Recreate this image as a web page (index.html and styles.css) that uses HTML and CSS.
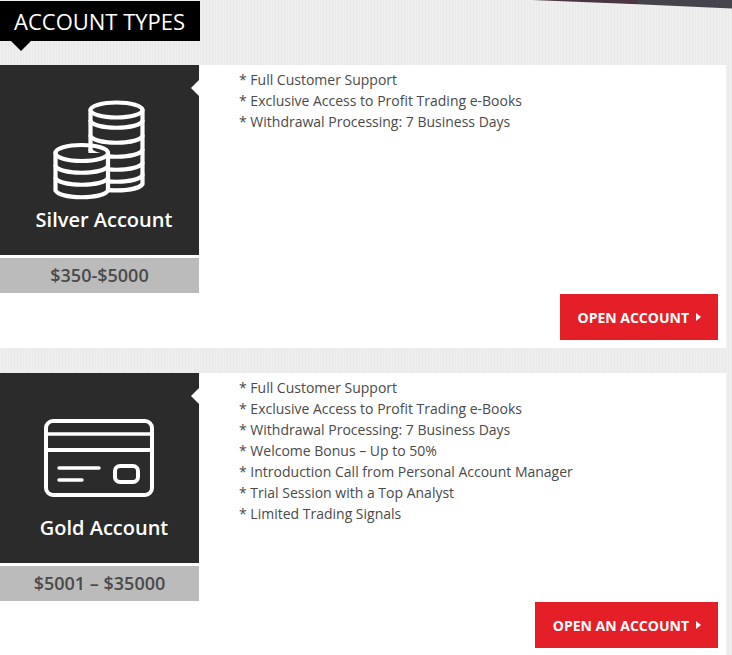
FILE: index.html
```html
<!DOCTYPE html>
<html lang="en">
<head>
<meta charset="utf-8">
<title>Account Types</title>
<link rel="stylesheet" href="styles.css">
</head>
<body>
<svg class="corner" width="202" height="10" viewBox="0 0 202 10"><polygon points="2,0 108,0 108,4.300" fill="#4a3540"/><polygon points="108,0 202,0 202,8.600 108,4.300" fill="#45444c"/></svg>
<h1 class="heading">ACCOUNT TYPES</h1>
<section class="card">
  <div class="side">
    <div class="tile">
      <svg class="icon icon-coins" width="92" height="100" viewBox="0 0 92 100" fill="none" stroke="#fff" stroke-width="4.200" stroke-linecap="round">
        <path d="M37.500 10V84C43 92.500 84 92.500 89.500 84V10"/>
        <ellipse cx="63.500" cy="10" rx="26" ry="7.500"/>
        <path d="M37.500 21C43 30 84 30 89.500 21M37.500 36C43 45 84 45 89.500 36M37.500 50C43 59 84 59 89.500 50M37.500 63C43 72 84 72 89.500 63M37.500 75C43 84 84 84 89.500 75"/>
        <path d="M2.500 53V90.500C8 99.500 49.500 99.500 55 90.500V53" fill="#2b2b2b"/>
        <ellipse cx="28.750" cy="53" rx="26.250" ry="8"/>
        <path d="M2.500 66C8 75 49.500 75 55 66M2.500 78C8 87 49.500 87 55 78"/>
      </svg>
      <h2 class="name">Silver Account</h2>
    </div>
    <p class="price">$350-$5000</p>
  </div>
  <div class="body">
    <p class="features">* Full Customer Support<br>* Exclusive Access to Profit Trading e-Books<br>* Withdrawal Processing: 7 Business Days</p>
    <a class="btn" href="#">OPEN ACCOUNT<span class="caret"></span></a>
  </div>
</section>
<section class="card">
  <div class="side">
    <div class="tile">
      <svg class="icon icon-card" width="110" height="78" viewBox="0 0 110 78" fill="none" stroke="#fff" stroke-width="4" stroke-linecap="round">
        <rect x="2" y="2" width="106" height="74" rx="7"/>
        <path d="M2 15H108" stroke-width="3.500"/>
        <path d="M2 31H108"/>
        <path d="M15 49H55" stroke-width="3.500"/>
        <path d="M15 61H38" stroke-width="3.500"/>
        <rect x="71" y="47" width="23" height="16" rx="5"/>
      </svg>
      <h2 class="name">Gold Account</h2>
    </div>
    <p class="price">$5001 – $35000</p>
  </div>
  <div class="body">
    <p class="features">* Full Customer Support<br>* Exclusive Access to Profit Trading e-Books<br>* Withdrawal Processing: 7 Business Days<br>* Welcome Bonus – Up to 50%<br>* Introduction Call from Personal Account Manager<br>* Trial Session with a Top Analyst<br>* Limited Trading Signals</p>
    <a class="btn" href="#">OPEN AN ACCOUNT<span class="caret"></span></a>
  </div>
</section>
</body>
</html>
```
FILE: styles.css
```css
* { box-sizing: border-box; }
html, body { height: 100%; }
body {
  margin: 0;
  padding-top: 1px;
  overflow: hidden;
  position: relative;
  font-family: "Open Sans", sans-serif;
  color: #4a4a4a;
  background: repeating-linear-gradient(90deg, #eee 0, #eee 2px, #e9e9e9 2px, #e9e9e9 3px);
}
.corner { position: absolute; top: 0; right: 0; }
.heading {
  position: relative;
  width: 200px;
  height: 40px;
  margin: 0 0 24px;
  background: #000;
  color: #fff;
  font-size: 22px;
  font-weight: 400;
  line-height: 41px;
  padding-left: 14px;
  white-space: nowrap;
}
.heading::after {
  content: "";
  position: absolute;
  left: 11px;
  top: 40px;
  border: 10px solid transparent;
  border-top-color: #000;
  border-bottom: 0;
}
.card {
  display: flex;
  width: 726px;
  height: 283px;
  margin-bottom: 25px;
  background: #fff;
}
.side { width: 199px; flex: none; }
.tile {
  position: relative;
  height: 190px;
  background: #2b2b2b;
  display: flex;
  flex-direction: column;
  align-items: center;
  color: #fff;
}
.tile::after {
  content: "";
  position: absolute;
  right: 0;
  top: 15px;
  border: 8px solid transparent;
  border-right-color: #fff;
  border-left: 0;
}
.icon { display: block; margin-top: 35px; }
.icon-coins { margin-left: -1px; }
.icon-card { margin-top: 46px; margin-left: -1px; }
.name {
  margin: 6px 0 0 9px;
  font-size: 20px;
  font-weight: 600;
  line-height: 27px;
  color: #fff;
}
.icon-card + .name { margin-top: 17px; }
.price {
  height: 35px;
  margin: 3px 0 0;
  background: #bbb;
  text-align: center;
  font-size: 18px;
  font-weight: 600;
  line-height: 35px;
  color: #4a4a4a;
}
.body {
  flex: 1;
  display: flex;
  flex-direction: column;
  align-items: flex-end;
  padding: 4px 8px 8px 40px;
}
.features {
  align-self: stretch;
  margin: 0;
  flex: 1;
  font-size: 14px;
  line-height: 21px;
}
.btn {
  display: flex;
  align-items: center;
  height: 46px;
  padding: 0 17px 0 17.400px;
  background: #e41f28;
  color: #fff;
  font-size: 14px;
  font-weight: 700;
  text-decoration: none;
}
.caret {
  margin-left: 7px;
  border: 4px solid transparent;
  border-left: 5px solid #fff;
  border-right: 0;
}
```
